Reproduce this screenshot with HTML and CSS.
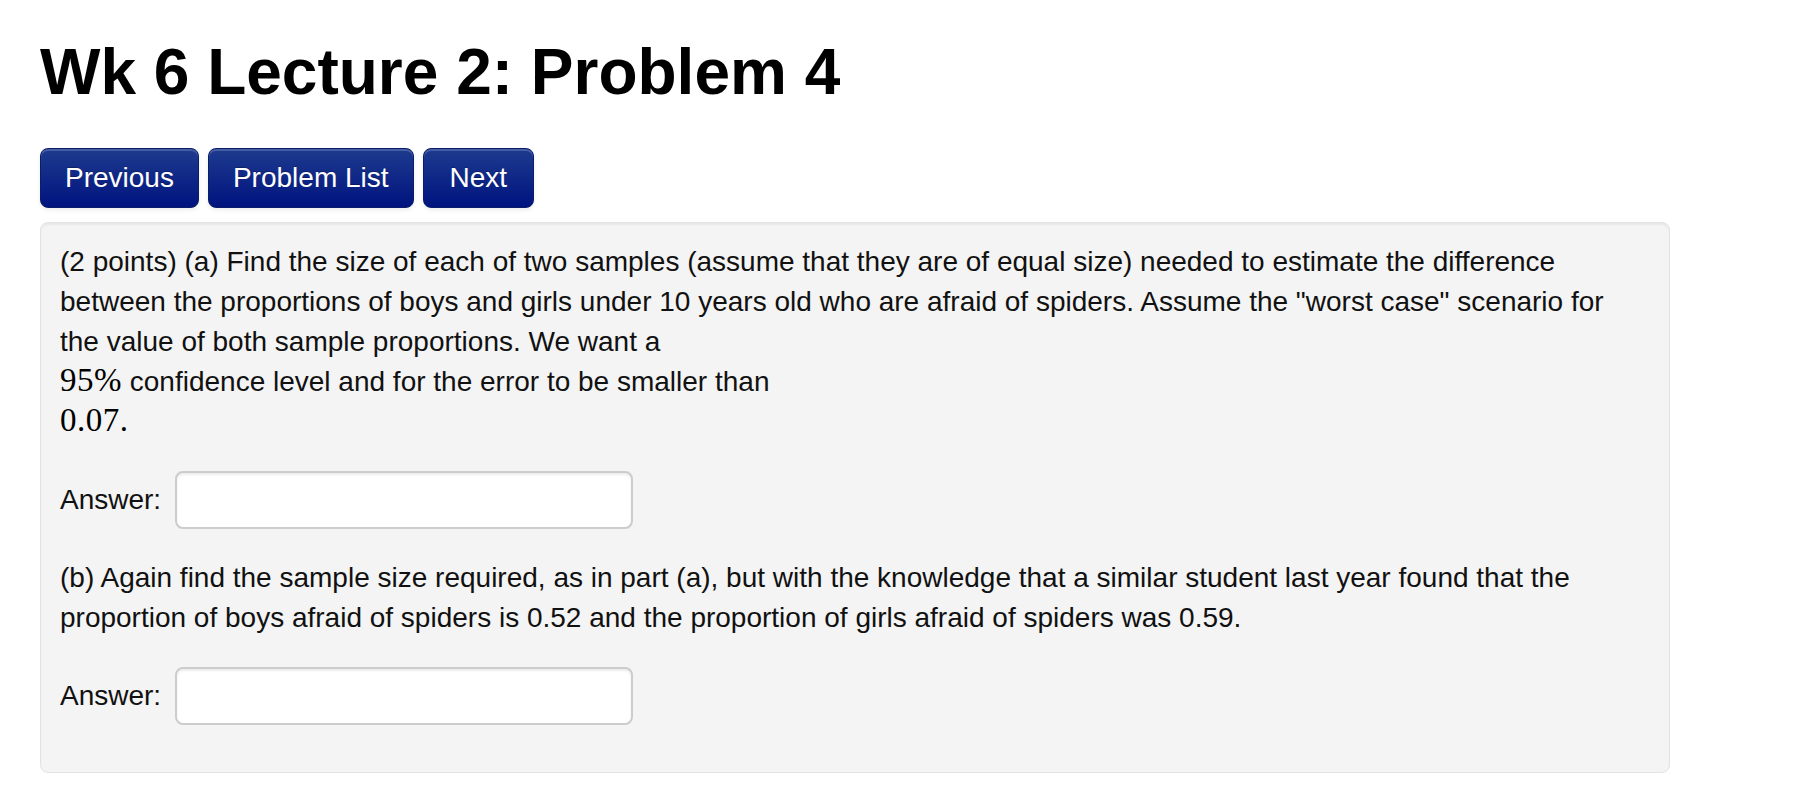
FILE: index.html
```html
<!DOCTYPE html>
<html lang="en">
<head>
<meta charset="utf-8">
<title>Wk 6 Lecture 2: Problem 4</title>
<link rel="stylesheet" href="styles.css">
</head>
<body>
<div class="page">
  <h1 class="title">Wk 6 Lecture 2: Problem 4</h1>
  <nav class="nav">
    <a class="btn" href="#">Previous</a>
    <a class="btn" href="#">Problem List</a>
    <a class="btn btn-next" href="#">Next</a>
  </nav>
  <div class="well">
    <p class="text">(2 points) (a) Find the size of each of two samples (assume that they are of equal size) needed to estimate the difference between the proportions of boys and girls under 10 years old who are afraid of spiders. Assume the "worst case" scenario for the value of both sample proportions. We want a<br><span class="math">95%</span> confidence level and for the error to be smaller than<br><span class="math">0.07.</span></p>
    <div class="answer">
      <label class="answer-label">Answer:</label>
      <input class="answer-input" type="text">
    </div>
    <p class="text">(b) Again find the sample size required, as in part (a), but with the knowledge that a similar student last year found that the proportion of boys afraid of spiders is 0.52 and the proportion of girls afraid of spiders was 0.59.</p>
    <div class="answer">
      <label class="answer-label">Answer:</label>
      <input class="answer-input" type="text">
    </div>
  </div>
</div>
</body>
</html>
```
FILE: styles.css
```css
html, body {
  margin: 0;
  padding: 0;
  background: #ffffff;
}

body {
  font-family: "Liberation Sans", Arial, Helvetica, sans-serif;
  color: #111111;
}

.page {
  padding: 36px 0 0 40px;
  width: 1630px;
}

.title {
  margin: 0;
  font-size: 64px;
  line-height: 72px;
  font-weight: bold;
  color: #000000;
}

.nav {
  display: flex;
  gap: 9px;
  margin-top: 40px;
}

.btn {
  display: block;
  padding: 9px 24px;
  font-size: 28px;
  line-height: 40px;
  color: #ffffff;
  text-decoration: none;
  text-shadow: 0 -1px 0 rgba(0, 0, 0, 0.25);
  background: linear-gradient(to bottom, #1d3b8e 0%, #00137f 100%);
  border: 1px solid #0b1e6a;
  border-radius: 8px;
  box-shadow: inset 0 2px 0 rgba(255, 255, 255, 0.18), 0 2px 4px rgba(0, 0, 0, 0.08);
}

.btn-next {
  padding: 9px 26px;
}

.well {
  margin-top: 14px;
  display: flex;
  flex-direction: column;
  gap: 29px;
  padding: 19px 19px 47px 19px;
  background: #f4f4f4;
  border: 1px solid #e3e3e3;
  border-radius: 8px;
  box-shadow: inset 0 2px 2px rgba(0, 0, 0, 0.05);
}

.text {
  margin: 0;
  font-size: 28px;
  line-height: 40px;
  color: #111111;
}

.math {
  font-family: "Liberation Serif", "Times New Roman", "DejaVu Serif", serif;
  font-size: 33px;
  line-height: 1;
  letter-spacing: 0.5px;
  color: #000000;
}

.answer {
  display: flex;
  align-items: center;
  gap: 14px;
}

.answer-label {
  font-size: 28px;
  line-height: 40px;
  color: #111111;
}

.answer-input {
  box-sizing: border-box;
  width: 458px;
  height: 58px;
  margin: 0;
  padding: 8px 12px;
  font-family: inherit;
  font-size: 28px;
  background: #ffffff;
  border: 2px solid #cccccc;
  border-radius: 8px;
  box-shadow: inset 0 2px 2px rgba(0, 0, 0, 0.075);
  outline: none;
}
```
